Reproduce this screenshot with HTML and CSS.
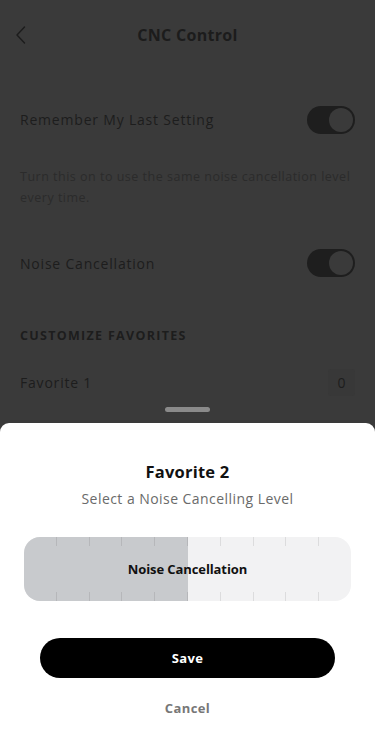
FILE: index.html
```html
<!DOCTYPE html>
<html>
<head>
<meta charset="utf-8">
<link rel="stylesheet" href="styles.css">
</head>
<body>
<div class="screen">
  <header class="header">
    <svg class="back" width="12" height="18" viewBox="0 0 12 18"><polyline points="9.5,1 2,9 9.5,17" fill="none" stroke="#1c1c1c" stroke-width="1.4" stroke-linecap="round" stroke-linejoin="round"/></svg>
    <h1 class="title">CNC Control</h1>
  </header>

  <div class="row first">
    <span class="label">Remember My Last Setting</span>
    <span class="toggle"><span class="knob"></span></span>
  </div>
  <p class="desc">Turn this on to use the same noise cancellation level every time.</p>

  <div class="row second">
    <span class="label">Noise Cancellation</span>
    <span class="toggle"><span class="knob"></span></span>
  </div>

  <div class="section">CUSTOMIZE FAVORITES</div>
  <div class="row fav">
    <span class="label">Favorite 1</span>
    <span class="value">0</span>
  </div>

  <div class="sheet-wrap">
    <div class="handle"></div>
    <div class="sheet">
      <h2 class="sheet-title">Favorite 2</h2>
      <p class="sheet-sub">Select a Noise Cancelling Level</p>
      <div class="slider">
        <div class="fill" style="width:50%"></div>
        <div class="ticks"><i></i><i></i><i></i><i></i><i></i><i></i><i></i><i></i><i></i><i></i></div>
        <div class="slider-label">Noise Cancellation</div>
        <div class="ticks"><i></i><i></i><i></i><i></i><i></i><i></i><i></i><i></i><i></i><i></i></div>
      </div>
      <button class="save">Save</button>
      <div class="cancel">Cancel</div>
    </div>
  </div>
</div>
</body>
</html>
```

FILE: styles.css
```css
* { box-sizing: border-box; }
html, body { margin: 0; padding: 0; }
body {
  font-family: "Open Sans", "Liberation Sans", sans-serif;
  background: #3a3a3a;
}
.screen {
  position: relative;
  width: 375px;
  height: 730px;
  overflow: hidden;
  background: #3a3a3a;
  color: #1d1d1d;
}
.header {
  position: relative;
  height: 70px;
  display: flex;
  align-items: center;
  justify-content: center;
}
.back {
  position: absolute;
  left: 15px;
  top: 26px;
}
.title {
  margin: 0;
  font-size: 16px;
  font-weight: 700;
  letter-spacing: 0.3px;
  color: #1c1c1c;
}
.row {
  height: 56px;
  padding: 0 20px;
  display: flex;
  align-items: center;
  justify-content: space-between;
}
.row.first { margin-top: 21px; }
.row.second { margin-top: 27px; }
.label {
  font-size: 14px;
  letter-spacing: 0.8px;
  color: #1d1d1d;
}
.toggle {
  width: 48px;
  height: 28px;
  border-radius: 14px;
  background: #1e1e1e;
  display: flex;
  align-items: center;
  justify-content: flex-end;
  padding: 2px;
}
.row.first .toggle { margin-top: 2px; }
.knob {
  width: 24px;
  height: 24px;
  border-radius: 50%;
  background: #3a3a3a;
}
.desc {
  margin: 19px 0 0;
  padding: 0 20px;
  font-size: 12.5px;
  line-height: 21px;
  letter-spacing: 0.5px;
  color: #2b2b2b;
}
.section {
  margin-top: 35px;
  padding: 0 20px;
  font-size: 12.5px;
  line-height: 20px;
  font-weight: 700;
  letter-spacing: 1.3px;
  color: #1d1d1d;
}
.row.fav { margin-top: 12px; height: 48px; }
.value {
  width: 27px;
  height: 27px;
  border-radius: 3px;
  background: #383838;
  display: flex;
  align-items: center;
  justify-content: center;
  font-size: 14px;
  color: #1d1d1d;
}
.sheet-wrap {
  position: absolute;
  left: 0;
  right: 0;
  bottom: 0;
  display: flex;
  flex-direction: column;
  align-items: center;
}
.handle {
  width: 45px;
  height: 5px;
  border-radius: 3px;
  background: #8a8a8a;
  margin-bottom: 11px;
}
.sheet {
  width: 100%;
  height: 307px;
  background: #fff;
  border-radius: 9px 9px 0 0;
  display: flex;
  flex-direction: column;
  align-items: center;
  padding-top: 38px;
}
.sheet-title {
  margin: 0;
  font-size: 16.5px;
  line-height: 22px;
  font-weight: 700;
  letter-spacing: 0.2px;
  color: #111;
}
.sheet-sub {
  margin: 6px 0 0;
  font-size: 14px;
  line-height: 20px;
  letter-spacing: 0.45px;
  color: #6a6a6a;
}
.slider {
  position: relative;
  margin-top: 28px;
  width: 327px;
  height: 64px;
  border-radius: 16px;
  background: #f2f2f3;
  overflow: hidden;
  display: flex;
  flex-direction: column;
}
.fill {
  position: absolute;
  left: 0;
  top: 0;
  bottom: 0;
  background: #c8cacd;
}
.ticks {
  position: relative;
  height: 9px;
  display: flex;
}
.ticks i {
  flex: 1;
  border-right: 1px solid rgba(0,0,0,0.09);
}
.ticks i:last-child { border-right: none; }
.slider-label {
  position: relative;
  flex: 1;
  display: flex;
  align-items: center;
  justify-content: center;
  font-size: 13px;
  font-weight: 700;
  letter-spacing: -0.1px;
  color: #111;
}
.save {
  margin-top: 37px;
  width: 295px;
  height: 40px;
  border: none;
  border-radius: 20px;
  background: #000;
  color: #fff;
  font-family: inherit;
  font-size: 13px;
  font-weight: 700;
  letter-spacing: 0.4px;
}
.cancel {
  margin-top: 20px;
  line-height: 20px;
  font-size: 13px;
  font-weight: 700;
  letter-spacing: 0.4px;
  color: #777;
}
```
